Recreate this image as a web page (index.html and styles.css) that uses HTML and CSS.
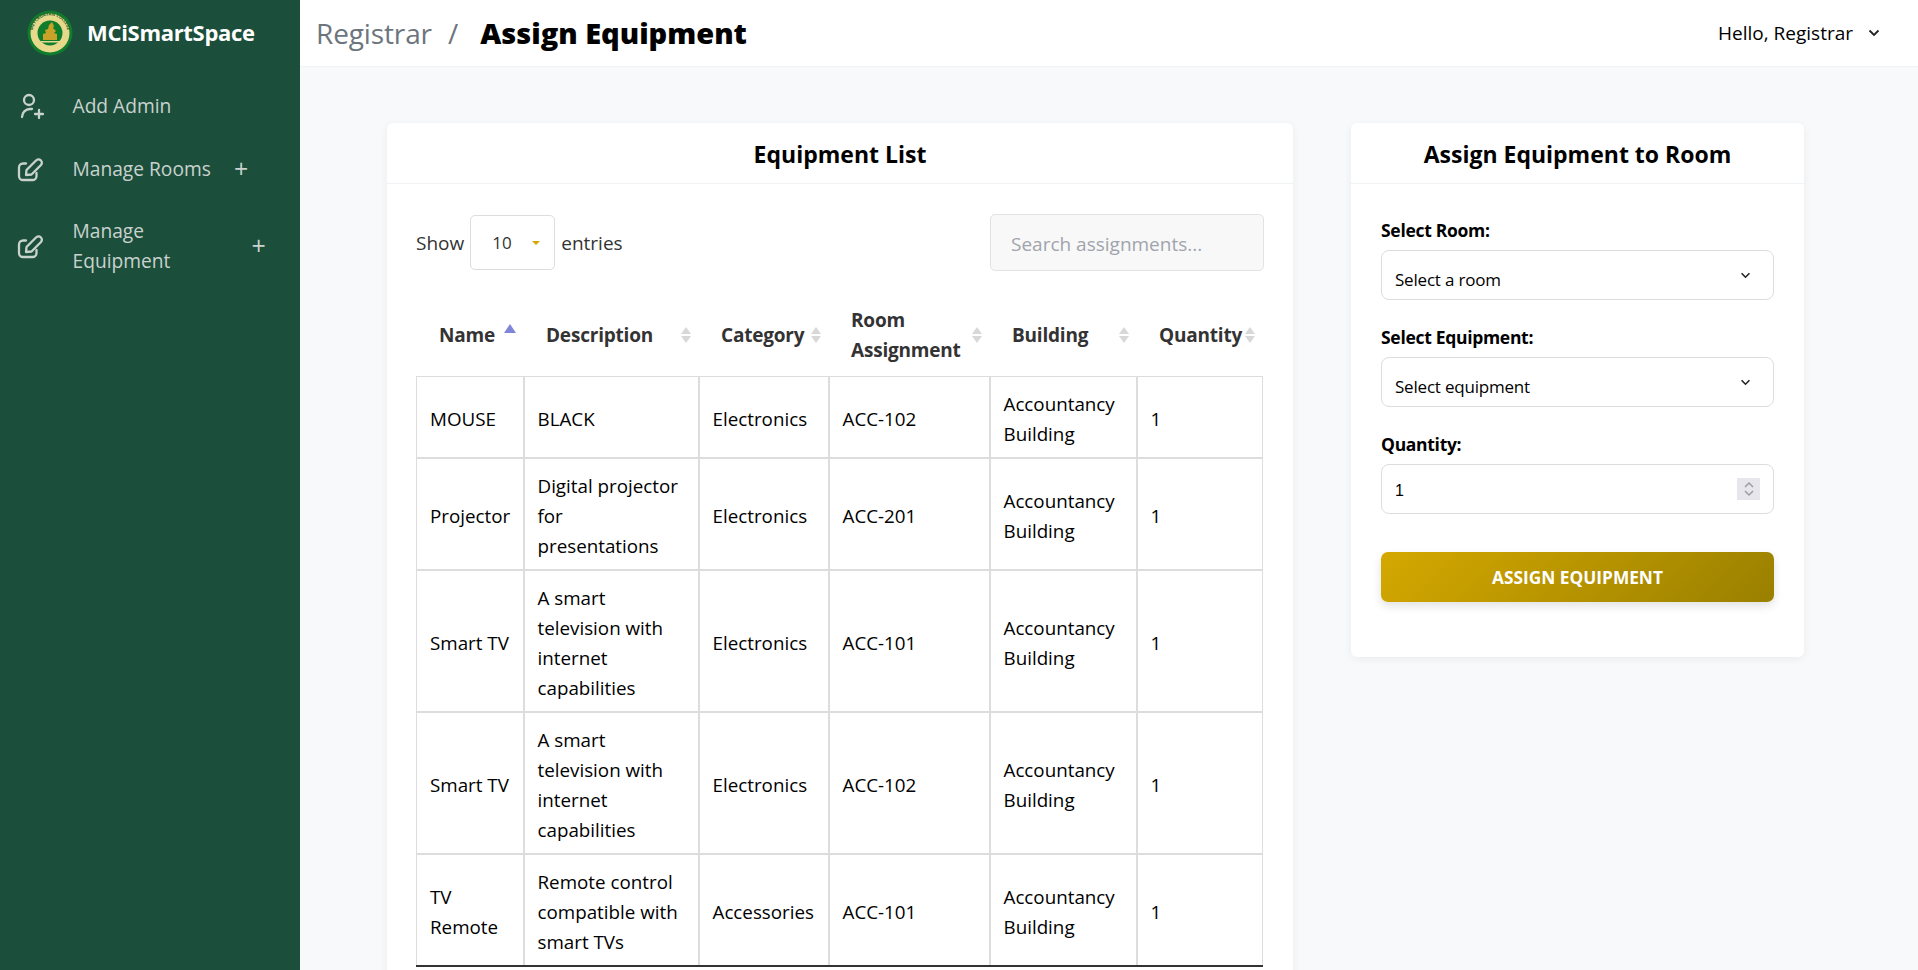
FILE: index.html
```html
<!DOCTYPE html>
<html lang="en">

<head>
    <meta charset="UTF-8">
    <meta name="viewport" content="width=device-width, initial-scale=1.0">
    <title>Assign Equipment</title>
    <link rel="stylesheet" href="styles.css">
</head>

<body>
    <div class="app">
        <aside class="sidebar">
            <div class="brand">
                <svg class="brand-logo" viewBox="0 0 46 46" width="46" height="46">
                    <defs>
                        <path id="logoRing" d="M5.500 23a17.500 17.500 0 0 1 35 0" />
                    </defs>
                    <circle cx="23" cy="23" r="22.500" fill="#0f7d2c" />
                    <circle cx="23" cy="23" r="19.500" fill="#e6d98c" />
                    <circle cx="23" cy="23" r="12.500" fill="#0f7d2c" />
                    <text class="logo-text"><textPath href="#logoRing" startOffset="50%" text-anchor="middle">MEYCAUAYAN COLLEGE</textPath></text>
                    <path d="M25 12l2 4-1 2 3 3-2 2 3 1v6H16v-6l3-1-1-3 3-1 1-4z" fill="#c9a227" />
                    <path d="M14 31h19v1.500H14z" fill="#e6d98c" />
                </svg>
                <span class="brand-name">MCiSmartSpace</span>
            </div>
            <nav class="side-nav">
                <a class="nav-item nav-admin">
                    <svg class="nav-icon" viewBox="0 0 28 28" width="28" height="28">
                        <circle cx="13" cy="8" r="5" />
                        <path d="M6 25a8 8 0 0 1 8-8h2" />
                        <path d="M19 22h8M23 18v8" />
                    </svg>
                    <span class="nav-label">Add Admin</span>
                </a>
                <a class="nav-item nav-rooms">
                    <svg class="nav-icon" viewBox="0 0 28 28" width="28" height="28">
                        <path d="M10 8.500H7a4 4 0 0 0-4 4V21a4 4 0 0 0 4 4h9.500a4 4 0 0 0 4-4v-3" />
                        <path d="M10.500 15L20 5.500a3 3 0 0 1 5 4.500l-9.500 9.500-5.500 .5z" />
                    </svg>
                    <span class="nav-label">Manage Rooms</span>
                    <span class="nav-plus">+</span>
                </a>
                <a class="nav-item nav-equipment">
                    <svg class="nav-icon" viewBox="0 0 28 28" width="28" height="28">
                        <path d="M10 8.500H7a4 4 0 0 0-4 4V21a4 4 0 0 0 4 4h9.500a4 4 0 0 0 4-4v-3" />
                        <path d="M10.500 15L20 5.500a3 3 0 0 1 5 4.500l-9.500 9.500-5.500 .5z" />
                    </svg>
                    <span class="nav-label nav-label-wrap">Manage Equipment</span>
                    <span class="nav-plus">+</span>
                </a>
            </nav>
        </aside>
        <div class="main">
            <header class="topbar">
                <div class="crumbs">
                    <span class="crumb-parent">Registrar</span>
                    <span class="crumb-sep">/</span>
                    <span class="crumb-page">Assign Equipment</span>
                </div>
                <div class="user-menu">
                    <span>Hello, Registrar</span>
                    <svg viewBox="0 0 12 8" width="12" height="8" class="user-caret">
                        <path d="M1.500 1.500L6 6l4.500-4.500" />
                    </svg>
                </div>
            </header>
            <main class="content">
                <section class="card card-list">
                    <h2 class="card-title">Equipment List</h2>
                    <div class="card-body">
                        <div class="table-tools">
                            <div class="length-ctl">
                                <span>Show</span>
                                <span class="length-box"><span>10</span><i class="mini-caret"></i></span>
                                <span>entries</span>
                            </div>
                            <input class="search-box" type="text" placeholder="Search assignments...">
                        </div>
                        <table class="eq-table">
                            <colgroup>
                                <col class="c1">
                                <col class="c2">
                                <col class="c3">
                                <col class="c4">
                                <col class="c5">
                                <col class="c6">
                            </colgroup>
                            <thead>
                                <tr>
                                    <th class="sorted">Name</th>
                                    <th>Description</th>
                                    <th>Category</th>
                                    <th>Room Assignment</th>
                                    <th>Building</th>
                                    <th>Quantity</th>
                                </tr>
                            </thead>
                            <tbody>
                                <tr>
                                    <td>MOUSE</td>
                                    <td>BLACK</td>
                                    <td>Electronics</td>
                                    <td>ACC-102</td>
                                    <td>Accountancy Building</td>
                                    <td>1</td>
                                </tr>
                                <tr>
                                    <td>Projector</td>
                                    <td>Digital projector for presentations</td>
                                    <td>Electronics</td>
                                    <td>ACC-201</td>
                                    <td>Accountancy Building</td>
                                    <td>1</td>
                                </tr>
                                <tr>
                                    <td>Smart TV</td>
                                    <td>A smart television with internet capabilities</td>
                                    <td>Electronics</td>
                                    <td>ACC-101</td>
                                    <td>Accountancy Building</td>
                                    <td>1</td>
                                </tr>
                                <tr>
                                    <td>Smart TV</td>
                                    <td>A smart television with internet capabilities</td>
                                    <td>Electronics</td>
                                    <td>ACC-102</td>
                                    <td>Accountancy Building</td>
                                    <td>1</td>
                                </tr>
                                <tr>
                                    <td>TV Remote</td>
                                    <td>Remote control compatible with smart TVs</td>
                                    <td>Accessories</td>
                                    <td>ACC-101</td>
                                    <td>Accountancy Building</td>
                                    <td>1</td>
                                </tr>
                            </tbody>
                        </table>
                    </div>
                </section>
                <section class="card card-form">
                    <h2 class="card-title">Assign Equipment to Room</h2>
                    <form class="card-body assign-form">
                        <label class="field-label">Select Room:</label>
                        <div class="field field-select">
                            <span>Select a room</span>
                            <svg viewBox="0 0 12 8" width="11" height="7"><path d="M1.500 1.500L6 6l4.500-4.500" /></svg>
                        </div>
                        <label class="field-label">Select Equipment:</label>
                        <div class="field field-select">
                            <span>Select equipment</span>
                            <svg viewBox="0 0 12 8" width="11" height="7"><path d="M1.500 1.500L6 6l4.500-4.500" /></svg>
                        </div>
                        <label class="field-label">Quantity:</label>
                        <div class="field field-number">
                            <span class="number-value">1</span>
                            <span class="spinner">
                                <svg viewBox="0 0 10 16" width="10" height="16">
                                    <path d="M1 6l4-4 4 4M1 10l4 4 4-4" />
                                </svg>
                            </span>
                        </div>
                        <button class="assign-btn" type="button">ASSIGN EQUIPMENT</button>
                    </form>
                </section>
            </main>
        </div>
    </div>
</body>

</html>
```
FILE: styles.css
```css
* {
    box-sizing: border-box;
}

html,
body {
    margin: 0;
    height: 100%;
    overflow: hidden;
}

body {
    font-family: "Open Sans", "Noto Sans", sans-serif;
    font-size: 17px;
    color: #000;
    background: #f8f9fb;
}

.app {
    display: flex;
    height: 100vh;
}

/* sidebar */
.sidebar {
    width: 300px;
    flex: none;
    background: #1b4f3b;
    color: #c9d2ce;
}

.brand {
    display: flex;
    align-items: center;
    height: 66px;
    padding-left: 27px;
    gap: 14px;
}

.logo-text {
    font-size: 4.200px;
    font-weight: 700;
    fill: #2a5a2a;
}

.brand-name {
    font-size: 22px;
    font-weight: 700;
    letter-spacing: -0.3px;
    color: #fff;
    padding-bottom: 2px;
}

.side-nav {
    display: flex;
    flex-direction: column;
}

.nav-item {
    display: flex;
    align-items: center;
    padding-left: 16px;
}

.nav-admin {
    height: 40px;
    margin-top: 20px;
}

.nav-rooms {
    height: 40px;
    margin-top: 23px;
}

.nav-equipment {
    height: 60px;
    margin-top: 27px;
}

.nav-icon {
    flex: none;
    fill: none;
    stroke: #c9d2ce;
    stroke-width: 2.300;
    stroke-linecap: round;
    stroke-linejoin: round;
    margin-right: 28.500px;
}

.nav-label {
    font-size: 19.200px;
    line-height: 30px;
}

.nav-label-wrap {
    width: 156px;
}

.nav-plus {
    font-size: 25px;
    margin-left: 23px;
    margin-top: -3px;
}

/* top bar */
.main {
    flex: 1;
    min-width: 0;
    display: flex;
    flex-direction: column;
}

.topbar {
    height: 67px;
    flex: none;
    display: flex;
    align-items: center;
    justify-content: space-between;
    background: #fff;
    border-bottom: 1px solid #f1f2f4;
    padding: 0 38px 0 16px;
}

.crumbs {
    display: flex;
    align-items: center;
}

.crumb-parent {
    font-size: 28px;
    color: #6c757d;
    letter-spacing: -0.13px;
}

.crumb-sep {
    font-size: 28px;
    color: #6c757d;
    margin: 0 22px 0 16px;
}

.crumb-page {
    font-size: 29px;
    font-weight: 800;
    padding-bottom: 2px;
}

.user-menu {
    display: flex;
    align-items: center;
    gap: 15px;
    font-size: 19px;
}

.user-caret,
.field-select svg {
    fill: none;
    stroke: #222;
    stroke-width: 1.800;
}

/* cards */
.content {
    flex: 1;
    display: flex;
    align-items: flex-start;
    padding: 56px 114px 0 87px;
    gap: 58px;
}

.card {
    background: #fff;
    border-radius: 6px;
    box-shadow: 0 2px 8px rgba(0, 0, 0, 0.06);
}

.card-list {
    width: 906px;
    flex: none;
    padding-bottom: 40px;
}

.card-form {
    width: 453px;
    flex: none;
}

.card-title {
    margin: 0;
    height: 61px;
    line-height: 63px;
    font-size: 23px;
    font-weight: 700;
    text-align: center;
    border-bottom: 1px solid #f1f2f4;
}

.card-body {
    padding: 30px 29px;
}

/* table controls */
.table-tools {
    display: flex;
    justify-content: space-between;
    align-items: center;
    height: 57px;
    margin-bottom: 25px;
}

.length-ctl {
    display: flex;
    align-items: center;
    gap: 6px;
    font-size: 19px;
    color: #333;
}

.length-box {
    display: flex;
    align-items: center;
    justify-content: space-between;
    width: 85px;
    height: 55px;
    padding: 0 14px 0 21px;
    border: 1px solid #ddd;
    border-radius: 5px;
    font-size: 17px;
}

.mini-caret {
    border: 4px solid transparent;
    border-top-color: #d4a800;
    border-bottom: 0;
}

.search-box {
    width: 274px;
    height: 57px;
    padding: 2px 20px 0;
    background: #f8f8f8;
    border: 1px solid #e3e3e3;
    border-radius: 5px;
    font: inherit;
    font-size: 19px;
}

.search-box::placeholder {
    color: #a0a4ac;
    opacity: 1;
}

/* table */
.eq-table {
    width: 846px;
    table-layout: fixed;
    border-collapse: collapse;
    font-size: 18.800px;
}

.c1 {
    width: 107px;
}

.c2 {
    width: 175px;
}

.c3 {
    width: 130px;
}

.c4 {
    width: 161px;
}

.c5 {
    width: 147px;
}

.c6 {
    width: 126px;
}

.eq-table th {
    position: relative;
    height: 80px;
    padding: 0 26px 2px 22.500px;
    text-align: left;
    font-size: 19px;
    line-height: 30px;
    font-weight: 700;
    letter-spacing: -0.2px;
    color: #333;
}

.eq-table th::before {
    content: "";
    position: absolute;
    right: 8px;
    top: 31px;
    border: 5px solid transparent;
    border-top: 0;
    border-bottom: 7px solid #d8d8d8;
}

.eq-table th::after {
    content: "";
    position: absolute;
    right: 8px;
    top: 40px;
    border: 5px solid transparent;
    border-bottom: 0;
    border-top: 7px solid #d8d8d8;
}

.eq-table th.sorted::before {
    top: 28px;
    border-width: 0 6px 9px;
    border-bottom-color: #7f85d8;
}

.eq-table th.sorted::after {
    display: none;
}

.eq-table td {
    padding: 12px 9px 8px 13px;
    line-height: 30px;
    border: 2px solid #ddd;
    color: #000;
}

.eq-table td:first-child {
    border-left-width: 1px;
}

.eq-table td:last-child {
    border-right-width: 1px;
}

.eq-table tbody tr:first-child td {
    border-top-width: 1px;
}

.eq-table tbody tr:last-child td {
    border-bottom-color: #333;
}

/* form */
.assign-form {
    padding: 34px 30px 55px;
    display: flex;
    flex-direction: column;
}

.field-label {
    font-size: 17.500px;
    font-weight: 700;
    letter-spacing: -0.3px;
    line-height: 24px;
    margin-bottom: 8px;
}

.field {
    display: flex;
    align-items: center;
    justify-content: space-between;
    height: 50px;
    padding: 0 13px;
    border: 1px solid #ddd;
    border-radius: 8px;
    margin-bottom: 25px;
    font-size: 17px;
    letter-spacing: -0.2px;
}

.field-select span {
    padding-top: 9px;
}

.field-select svg {
    margin-right: 9px;
}

.field-number {
    font-family: "Liberation Sans", sans-serif;
    font-size: 16px;
    letter-spacing: 0;
}

.number-value {
    padding-top: 3px;
}

.spinner {
    display: flex;
    align-items: center;
    justify-content: center;
    width: 23px;
    height: 22px;
    background: #e6e6ec;
}

.spinner svg {
    fill: none;
    stroke: #9c9ca6;
    stroke-width: 1.500;
}

.assign-btn {
    height: 50px;
    margin-top: 13px;
    border: 0;
    border-radius: 7px;
    background: linear-gradient(135deg, #d4a800, #9a8000);
    box-shadow: 0 4px 10px rgba(0, 0, 0, 0.12);
    color: #fff;
    font: inherit;
    font-size: 17.300px;
    font-weight: 700;
}
```
